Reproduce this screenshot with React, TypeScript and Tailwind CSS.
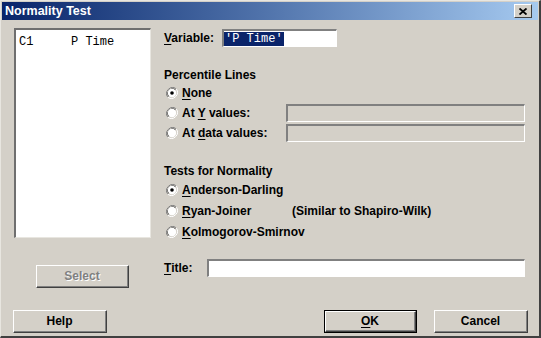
import React from 'react'

// ── Classic Win9x-style bits ──────────────────────────────────────────────────

const FONT = "font-['Liberation_Sans',Arial,sans-serif]"
const MONO = "font-['Liberation_Mono','Courier_New',monospace]"

function U({ children }: { children: React.ReactNode }) {
  return <span className="underline underline-offset-[2px]">{children}</span>
}

function Radio({ checked }: { checked?: boolean }) {
  return (
    <svg width="12" height="12" viewBox="0 0 12 12" className="flex-none">
      <path d="M10.2 1.8 A6 6 0 0 0 1.8 10.2" stroke="#808080" strokeWidth="1" fill="none" />
      <path d="M9.4 2.6 A4.9 4.9 0 0 0 2.6 9.4" stroke="#404040" strokeWidth="1" fill="none" />
      <path d="M1.8 10.2 A6 6 0 0 0 10.2 1.8" stroke="#ffffff" strokeWidth="1" fill="none" />
      <circle cx="6" cy="6" r="4.2" fill="#ffffff" />
      {checked && <circle cx="6" cy="6" r="1.8" fill="#000000" />}
    </svg>
  )
}

function Field({ className = '', disabled, children }: { className?: string; disabled?: boolean; children?: React.ReactNode }) {
  return (
    <div
      className={`h-[18px] border-t-2 border-l-2 border-t-[#808080] border-l-[#808080] border-b border-r border-b-white border-r-white flex items-center ${
        disabled ? 'bg-[#d4d0c8]' : 'bg-white'
      } ${className}`}
    >
      {children}
    </div>
  )
}

function Button({
  children,
  className = '',
  isDefault,
  disabled,
}: {
  children: React.ReactNode
  className?: string
  isDefault?: boolean
  disabled?: boolean
}) {
  return (
    <div className={`h-[23px] ${isDefault ? 'border border-black' : ''} ${className}`}>
      <div className="h-full border-t border-l border-t-white border-l-white border-b border-r border-b-[#404040] border-r-[#404040]">
        <div className="h-full border-b border-r border-b-[#808080] border-r-[#808080] flex items-center justify-center">
          <span className={disabled ? 'text-[#808080] [text-shadow:1px_1px_0_#ffffff]' : 'text-black'}>{children}</span>
        </div>
      </div>
    </div>
  )
}

function RadioRow({ checked, children, className = '' }: { checked?: boolean; children: React.ReactNode; className?: string }) {
  return (
    <div className={`flex items-center ${className}`}>
      <div className="pl-[2px] w-[18px]">
        <Radio checked={checked} />
      </div>
      {children}
    </div>
  )
}

// ── Dialog ────────────────────────────────────────────────────────────────────

export default function App() {
  return (
    <div
      className={`${FONT} w-[541px] h-[338px] bg-[#d4d0c8] text-[12px] font-bold text-black flex flex-col border-t border-l border-t-[#e8e6e0] border-l-[#e8e6e0] border-b-2 border-r-2 border-b-[#404040] border-r-[#404040] overflow-hidden select-none`}
    >
      {/* Title bar */}
      <div className="mx-[1px] mt-[1px] h-[18px] flex-none flex items-center justify-between bg-gradient-to-r from-[#0a246a] to-[#a6caf0] pl-[3px] pr-[6px]">
        <span className="text-white text-[12.5px] font-bold">Normality Test</span>
        <div className="w-[18px] h-[14px] bg-[#d4d0c8] border-t border-l border-t-white border-l-white border-b border-r border-b-[#404040] border-r-[#404040] flex items-center justify-center">
          <svg width="8" height="7" viewBox="0 0 8 7">
            <path d="M0.5 0.5 L7.5 6.5 M7.5 0.5 L0.5 6.5" stroke="#000" strokeWidth="1.8" />
          </svg>
        </div>
      </div>

      {/* Body */}
      <div className="flex pt-[8px] pl-[13px]">
        {/* Left: variable list + select */}
        <div className="w-[137px] flex flex-col">
          <div className="h-[210px] bg-white border-t-2 border-l-2 border-t-[#6f6f6f] border-l-[#6f6f6f] border-b border-r border-b-[#e8e6e0] border-r-[#e8e6e0] pt-[3px] pl-[3px]">
            <div className={`${MONO} font-normal text-[12px] flex`}>
              <span className="w-[52px]">C1</span>
              <span>P Time</span>
            </div>
          </div>
          <Button disabled className="mt-[27px] ml-[22px] w-[93px]">
            Select
          </Button>
        </div>

        {/* Right: options */}
        <div className="ml-[13px] w-[361px] flex flex-col">
          <div className="h-[20px] flex items-center">
            <span className="w-[58px]">
              <U>V</U>ariable:
            </span>
            <Field className="w-[115px]">
              <span className={`${MONO} font-normal text-[12px] bg-[#0a246a] text-white px-[1px] leading-[14px]`}>
                'P Time'
              </span>
            </Field>
          </div>

          <div className="mt-[19px] h-[16px] flex items-center">Percentile Lines</div>
          <RadioRow checked className="h-[20px]">
            <U>N</U>one
          </RadioRow>
          <RadioRow className="h-[20px]">
            <span className="w-[104px]">
              At <U>Y</U> values:
            </span>
            <Field disabled className="flex-1" />
          </RadioRow>
          <RadioRow className="h-[20px]">
            <span className="w-[104px]">
              At <U>d</U>ata values:
            </span>
            <Field disabled className="flex-1" />
          </RadioRow>

          <div className="mt-[20px] h-[16px] flex items-center">Tests for Normality</div>
          <RadioRow checked className="h-[21px]">
            <U>A</U>nderson-Darling
          </RadioRow>
          <RadioRow className="h-[21px]">
            <span className="w-[110px]">
              <U>R</U>yan-Joiner
            </span>
            <span>(Similar to Shapiro-Wilk)</span>
          </RadioRow>
          <RadioRow className="h-[21px]">
            <U>K</U>olmogorov-Smirnov
          </RadioRow>

          <div className="mt-[16px] h-[20px] flex items-center">
            <span className="w-[43px]">
              <U>T</U>itle:
            </span>
            <Field className="flex-1" />
          </div>
        </div>
      </div>

      {/* Bottom buttons */}
      <div className="mt-[22px] flex items-center pl-[12px]">
        <Button className="w-[94px]">Help</Button>
        <Button isDefault className="ml-[217px] w-[93px]">
          <U>O</U>K
        </Button>
        <Button className="ml-[17px] w-[94px]">Cancel</Button>
      </div>
    </div>
  )
}
